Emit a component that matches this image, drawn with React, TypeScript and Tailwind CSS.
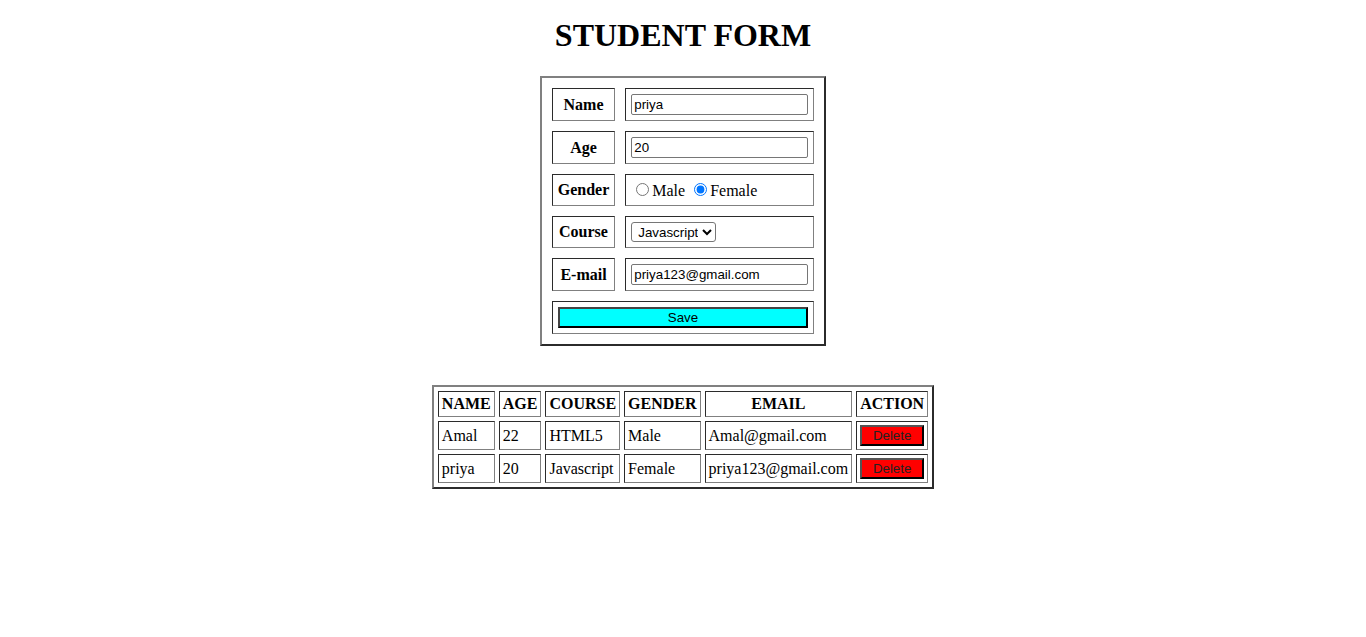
import { useState } from 'react';

type Student = {
  name: string;
  age: string;
  course: string;
  gender: string;
  email: string;
};

const initialStudents: Student[] = [
  { name: 'Amal', age: '22', course: 'HTML5', gender: 'Male', email: 'Amal@gmail.com' },
  { name: 'priya', age: '20', course: 'Javascript', gender: 'Female', email: 'priya123@gmail.com' },
];

// classic table look: outset frame, inset cells
const outset = 'border-2 border-t-[#808080] border-l-[#808080] border-r-[#2b2b2b] border-b-[#2b2b2b]';
const inset = 'border border-t-[#2b2b2b] border-l-[#2b2b2b] border-r-[#808080] border-b-[#808080]';

const inputCls =
  "w-[177px] h-[21px] border border-[#767676] rounded-[2px] px-[2px] text-[13.33px] leading-[normal] font-['Liberation_Sans',Arial,sans-serif] text-black";

const App = () => {
  const [students, setStudents] = useState(initialStudents);
  const [form, setForm] = useState<Student>({
    name: 'priya',
    age: '20',
    course: 'Javascript',
    gender: 'Female',
    email: 'priya123@gmail.com',
  });

  const update = (key: keyof Student, value: string) => setForm({ ...form, [key]: value });

  const labelCell = `${inset} px-[5px] py-[5px] text-center font-bold`;
  const fieldCell = `${inset} p-[5px] text-left`;

  return (
    <div className="font-['Liberation_Serif','Times_New_Roman',serif] text-black bg-white min-h-[637px] text-[16px] leading-[normal]">
      <h1 className="text-center text-[32px] font-bold leading-[37px] pt-[17px] mb-[22px]">STUDENT FORM</h1>

      {/* Form */}
      <table className={`${outset} border-separate border-spacing-[10px] mx-auto`}>
        <tbody>
          <tr>
            <td className={labelCell}>Name</td>
            <td className={fieldCell}>
              <input className={inputCls} value={form.name} onChange={(e) => update('name', e.target.value)} />
            </td>
          </tr>
          <tr>
            <td className={labelCell}>Age</td>
            <td className={fieldCell}>
              <input className={inputCls} value={form.age} onChange={(e) => update('age', e.target.value)} />
            </td>
          </tr>
          <tr>
            <td className={labelCell}>Gender</td>
            <td className={fieldCell}>
              <input
                type="radio"
                name="gender"
                className="ml-[5px] mr-[3px] mt-[3px]"
                checked={form.gender === 'Male'}
                onChange={() => update('gender', 'Male')}
              />
              Male{' '}
              <input
                type="radio"
                name="gender"
                className="ml-[5px] mr-[3px] mt-[3px]"
                checked={form.gender === 'Female'}
                onChange={() => update('gender', 'Female')}
              />
              Female
            </td>
          </tr>
          <tr>
            <td className={labelCell}>Course</td>
            <td className={fieldCell}>
              <select
                className="h-[20px] border border-[#767676] rounded-[3px] pl-[2px] pr-[1px] text-[13.33px] leading-[normal] font-['Liberation_Sans',Arial,sans-serif] text-black bg-white"
                value={form.course}
                onChange={(e) => update('course', e.target.value)}
              >
                <option>HTML5</option>
                <option>Javascript</option>
                <option>React</option>
              </select>
            </td>
          </tr>
          <tr>
            <td className={labelCell}>E-mail</td>
            <td className={fieldCell}>
              <input className={inputCls} value={form.email} onChange={(e) => update('email', e.target.value)} />
            </td>
          </tr>
          <tr>
            <td colSpan={2} className={fieldCell}>
              <button
                onClick={() => setStudents([...students, form])}
                className="w-full h-[21px] bg-[#00ffff] border-2 border-t-[#444] border-l-[#444] border-r-black border-b-black text-[13.33px] font-['Liberation_Sans',Arial,sans-serif] text-black leading-none align-middle"
              >
                Save
              </button>
            </td>
          </tr>
        </tbody>
      </table>

      {/* Student list */}
      <table className={`${outset} border-separate border-spacing-[4px] mx-auto mt-[39px]`}>
        <tbody>
          <tr>
            {['NAME', 'AGE', 'COURSE', 'GENDER', 'EMAIL', 'ACTION'].map((h) => (
              <th key={h} className={`${inset} p-[3px] font-bold text-center`}>
                {h}
              </th>
            ))}
          </tr>
          {students.map((s, i) => (
            <tr key={i}>
              <td className={`${inset} p-[3px]`}>{s.name}</td>
              <td className={`${inset} p-[3px]`}>{s.age}</td>
              <td className={`${inset} p-[3px]`}>{s.course}</td>
              <td className={`${inset} p-[3px]`}>{s.gender}</td>
              <td className={`${inset} p-[3px]`}>{s.email}</td>
              <td className={`${inset} p-[3px]`}>
                <button
                  onClick={() => setStudents(students.filter((_, j) => j !== i))}
                  className="w-[64px] h-[21px] bg-[#ff0000] border-2 border-t-[#555] border-l-[#555] border-r-black border-b-black text-[13.33px] font-['Liberation_Sans',Arial,sans-serif] text-[#222] leading-none align-middle"
                >
                  Delete
                </button>
              </td>
            </tr>
          ))}
        </tbody>
      </table>
    </div>
  );
};

export default App;
